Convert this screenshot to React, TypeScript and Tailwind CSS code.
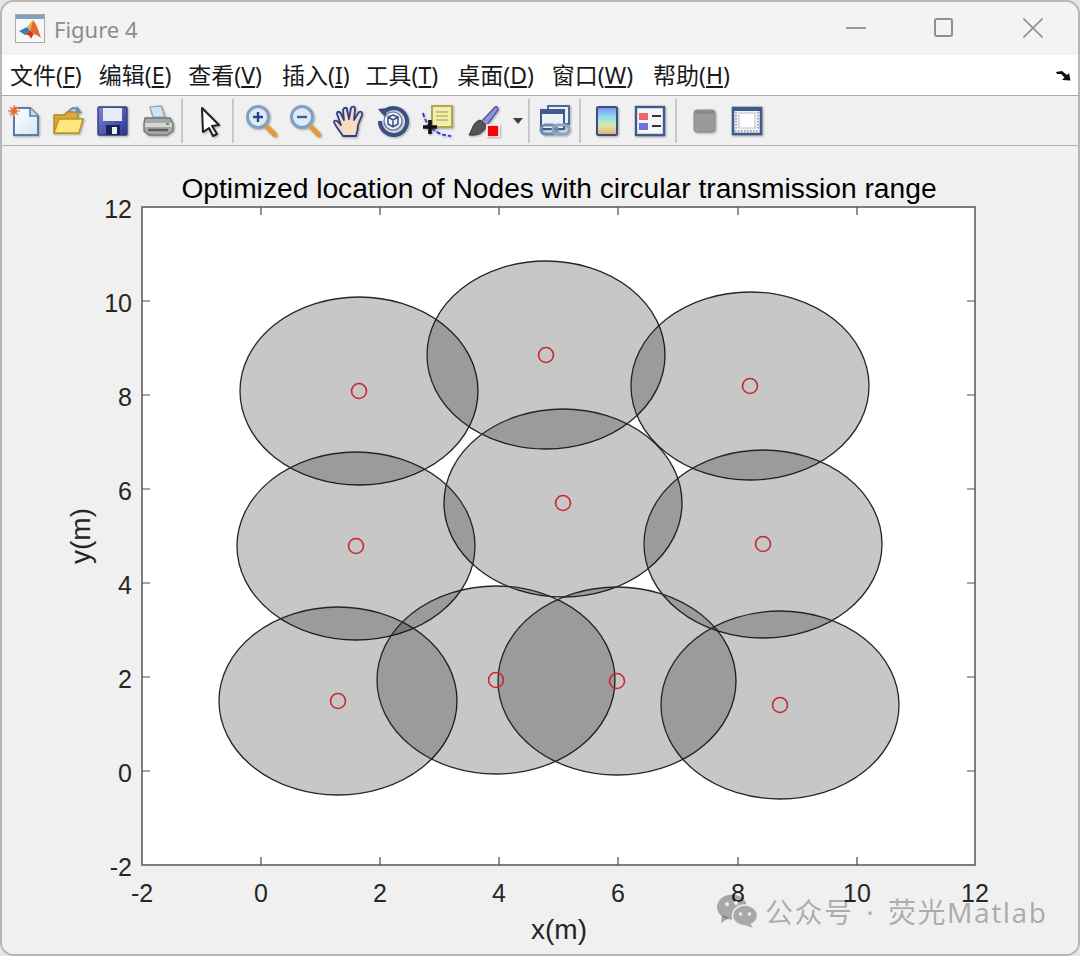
import React from 'react';

// circle centres in screen pixels, read off the plot
const nodes = [
  [359, 391],
  [546, 355],
  [750, 386],
  [563, 503],
  [356, 546],
  [763, 544],
  [338, 701],
  [496, 680],
  [617, 681],
  [780, 705],
];

const xTicks = [
  { label: '-2', x: 142 },
  { label: '0', x: 261 },
  { label: '2', x: 380 },
  { label: '4', x: 499 },
  { label: '6', x: 618 },
  { label: '8', x: 738 },
  { label: '10', x: 857 },
  { label: '12', x: 975 },
];

const yTicks = [
  { label: '12', y: 207 },
  { label: '10', y: 301 },
  { label: '8', y: 395 },
  { label: '6', y: 489 },
  { label: '4', y: 583 },
  { label: '2', y: 677 },
  { label: '0', y: 771 },
  { label: '-2', y: 865 },
];

const menus = [
  { text: '文件', key: 'F', cls: 'ml-[8px]' },
  { text: '编辑', key: 'E', cls: 'ml-[17px]' },
  { text: '查看', key: 'V', cls: 'ml-[17px]' },
  { text: '插入', key: 'I', cls: 'ml-[20px]' },
  { text: '工具', key: 'T', cls: 'ml-[16px]' },
  { text: '桌面', key: 'D', cls: 'ml-[19px]' },
  { text: '窗口', key: 'W', cls: 'ml-[18px]' },
  { text: '帮助', key: 'H', cls: 'ml-[20px]' },
];

const iconCls = 'w-8 h-8 shrink-0 blur-[0.6px] drop-shadow-[1px_1px_1px_rgba(0,0,0,0.3)]';

function Sep({ className }: { className: string }) {
  return <div className={`w-[2px] h-[44px] bg-[#c8c8c8] shrink-0 ${className}`} />;
}

function Tool({ className, children }: { className?: string; children: React.ReactNode }) {
  return (
    <svg viewBox="0 0 32 32" className={`${iconCls} ${className ?? ''}`}>
      {children}
    </svg>
  );
}

function MatlabLogo() {
  return (
    <svg viewBox="0 0 30 30" className="w-[30px] h-[30px] shrink-0">
      <rect x="0.5" y="0.5" width="29" height="28" fill="#f7f7f7" stroke="#a9a9a9" />
      <rect x="1" y="1" width="28" height="4" fill="#7fa3bd" />
      <path d="M4 17 L12 13 L15 16 L10 21 Z" fill="#2f7fc1" />
      <path d="M12 13 L18 6 L15 16 Z" fill="#e9b83a" />
      <path d="M18 6 Q21 8 26 24 Q22 21 19 20 Q16 17 15 16 Z" fill="#e8692b" />
      <path d="M15 16 L19 20 Q17 22 16 25 Q14 20 10 21 Z" fill="#c9401f" />
    </svg>
  );
}

export default function App() {
  return (
    <div className="w-[1080px] h-[956px] bg-[#e2e6e6] font-['Noto_Sans','Noto_Sans_CJK_SC',sans-serif]">
      <div className="relative w-full h-full flex flex-col border-2 border-[#b6b6b6] rounded-[14px] overflow-hidden bg-[#f0f0f0]">
        {/* title bar */}
        <div className="h-[53px] shrink-0 bg-[#f3f3f3] flex items-center pl-[13px]">
          <MatlabLogo />
          <span className="ml-[9px] mt-[2px] text-[22px] text-[#8c8c8c]">Figure 4</span>
          <div className="ml-auto -mt-[2px] flex items-center text-[#8a8a8a]">
            <div className="w-[20px] h-[2px] bg-[#9a9a9a]" />
            <div className="ml-[68px] w-[19px] h-[19px] border-2 border-[#8f8f8f] rounded-[3px]" />
            <svg viewBox="0 0 20 20" className="ml-[70px] mr-[35px] w-[20px] h-[20px]">
              <path d="M0.5 0.5 L19.5 19.5 M19.5 0.5 L0.5 19.5" stroke="#8f8f8f" strokeWidth="1.6" />
            </svg>
          </div>
        </div>

        {/* menu bar */}
        <div className="h-[41px] shrink-0 bg-white border-b border-[#ababab] flex items-center text-[23px] text-[#1a1a1a] leading-none">
          {menus.map((m) => (
            <span key={m.key} className={m.cls}>
              {m.text}(<u className="underline-offset-2">{m.key}</u>)
            </span>
          ))}
          <svg viewBox="0 0 15 11" className="ml-auto mr-[7px] mt-[1px] w-[15px] h-[11px] shrink-0">
            <path d="M0 2 L6 1 L11 5 L13 3 L14.5 10.5 L6 10 L8.5 7.5 L5 4 L1 4 Z" fill="#111" />
          </svg>
        </div>

        {/* toolbar */}
        <div className="h-[50px] shrink-0 bg-[#f0f0f0] border-b border-[#b4b4b4] flex items-center">
          <Tool className="ml-[6px]">
            <defs>
              <linearGradient id="pageFill" x1="0" y1="0" x2="1" y2="1">
                <stop offset="0" stopColor="#ffffff" />
                <stop offset="1" stopColor="#d4e6f7" />
              </linearGradient>
            </defs>
            <path d="M6 3 H22 L30 11 V30 H6 Z" fill="url(#pageFill)" stroke="#5b7ba6" strokeWidth="2" />
            <path d="M22 3 V11 H30" fill="#c7d9ec" stroke="#5b7ba6" strokeWidth="1.5" />
            <path d="M6 0 V12 M0 6 H12 M2 2 L10 10 M10 2 L2 10" stroke="#ef8b4a" strokeWidth="1.4" />
            <circle cx="6" cy="6" r="3" fill="#f26b2c" />
          </Tool>
          <Tool className="ml-[12px]">
            <path d="M2 10 H12 L15 7 H26 V28 H2 Z" fill="#d6a93a" stroke="#b58a22" strokeWidth="1.4" />
            <path d="M2 28 L7 14 H31 L27 28 Z" fill="#ffe57f" stroke="#bd9428" strokeWidth="1.6" />
            <path d="M16 7 Q21 0 27 5" fill="none" stroke="#6a8fb5" strokeWidth="2" />
            <path d="M25 1 L30 8 L23 8 Z" fill="#6a8fb5" />
          </Tool>
          <Tool className="ml-[13px]">
            <defs>
              <linearGradient id="diskFill" x1="0" y1="0" x2="1" y2="1">
                <stop offset="0" stopColor="#7c82d8" />
                <stop offset="1" stopColor="#2c3590" />
              </linearGradient>
            </defs>
            <rect x="1" y="2" width="29" height="28" rx="1" fill="url(#diskFill)" stroke="#33407f" strokeWidth="1.4" />
            <rect x="6" y="3" width="19" height="13" fill="#e8ecf6" />
            <rect x="9" y="20" width="14" height="10" fill="#1b2350" />
            <rect x="15" y="22" width="5" height="7" fill="#e8ecf6" />
          </Tool>
          <Tool className="ml-[13px]">
            <path d="M8 2 L19 1 L23 12 H11 Z" fill="#cfe3f4" stroke="#8fa0ae" strokeWidth="1.2" />
            <path d="M3 13 H28 L31 19 V26 L25 30 H7 L2 26 V18 Z" fill="#a8a8a8" stroke="#777" strokeWidth="1.4" />
            <path d="M3 18 H30 V22 H3 Z" fill="#d6d6d6" />
            <path d="M6 25 H26" stroke="#5c5c5c" strokeWidth="2.5" />
            <rect x="24" y="18" width="3" height="2" fill="#4fa35a" />
          </Tool>
          <Sep className="ml-[7px]" />
          <Tool className="ml-[11px]">
            <path
              d="M8 3 L25 20 L18 21 L23 29 L19 31 L15 23 L9 27 Z"
              fill="#fff"
              stroke="#1f1f1f"
              strokeWidth="2"
              strokeLinejoin="round"
            />
          </Tool>
          <Sep className="ml-[6px]" />
          <Tool className="ml-[11px]">
            <path d="M19 19 L30 30" stroke="#e39a3b" strokeWidth="5" strokeLinecap="round" />
            <circle cx="13" cy="12" r="10.5" fill="#dfeaf7" stroke="#7fa0c4" strokeWidth="3" />
            <path d="M8 12 H18 M13 7 V17" stroke="#29448c" strokeWidth="2.4" />
          </Tool>
          <Tool className="ml-[12px]">
            <path d="M19 19 L30 30" stroke="#e39a3b" strokeWidth="5" strokeLinecap="round" />
            <circle cx="13" cy="12" r="10.5" fill="#dfeaf7" stroke="#7fa0c4" strokeWidth="3" />
            <path d="M8 12 H18" stroke="#3f5b96" strokeWidth="2.4" />
          </Tool>
          <Tool className="ml-[12px]">
            <path
              d="M10 31 C7 26 3 22 1 17 C1 15 4 15 6 18 L8 20 L4 9 C4 6 7 6 8 9 L11 15 L10 5 C11 2 14 2 14 5 L16 14 L18 3 C19 1 22 1 22 4 L21 15 L26 7 C28 6 30 8 29 10 L25 20 C25 25 24 28 23 31 Z"
              fill="#f8dcc2"
              stroke="#2d3f86"
              strokeWidth="1.8"
              strokeLinejoin="round"
            />
          </Tool>
          <Tool className="ml-[12px]">
            <path d="M8 6 A13.5 13.5 0 1 1 3 16" fill="none" stroke="#3a4f85" strokeWidth="4" />
            <path d="M1 4 L11 3 L8 12 Z" fill="#3a4f85" />
            <circle cx="16" cy="16" r="9" fill="#eef2f8" stroke="#5d6f95" strokeWidth="1.2" />
            <path d="M11 12 L16 10 L21 12 V19 L16 22 L11 19 Z M11 12 L16 15 L21 12 M16 15 V22" fill="none" stroke="#3a4f85" strokeWidth="1.5" />
          </Tool>
          <Tool className="ml-[12px]">
            <rect x="11" y="1" width="20" height="21" fill="#f3eeb0" stroke="#b0a850" strokeWidth="2" />
            <path d="M15 7 H27 M15 11 H27 M15 15 H27" stroke="#bcb56a" strokeWidth="1.6" />
            <path d="M2 8 Q5 20 13 25 Q19 30 30 31" fill="none" stroke="#2f35e0" strokeWidth="1.8" strokeDasharray="4 2" />
            <path d="M2 22 H16 M9 15 V29" stroke="#111" strokeWidth="3.6" />
          </Tool>
          <Tool className="ml-[15px]">
            <path d="M13 17 L27 2 Q30 1 30 5 L18 21 Z" fill="#8e94d8" stroke="#4a5aa8" strokeWidth="1.4" />
            <path d="M12 15 Q6 17 4 24 L1 30 Q12 31 16 25 L19 21 Z" fill="#555" stroke="#333" strokeWidth="1" />
            <rect x="19" y="20" width="12" height="12" fill="#ff0000" stroke="#fff" strokeWidth="1.6" />
          </Tool>
          <svg viewBox="0 0 10 6" className="ml-[13px] w-[10px] h-[6px] shrink-0">
            <path d="M0 0 H10 L5 6 Z" fill="#3d3d3d" />
          </svg>
          <Sep className="ml-[5px]" />
          <Tool className="ml-[9px]">
            <rect x="9" y="1" width="21" height="18" fill="#e9eef6" stroke="#4d6a99" strokeWidth="2" />
            <rect x="2" y="5" width="23" height="19" fill="#eef2f8" stroke="#3f5a8c" strokeWidth="2" />
            <rect x="2" y="5" width="23" height="4" fill="#3f5a8c" />
            <rect x="2" y="20" width="16" height="9" rx="4.5" fill="none" stroke="#6d8db3" strokeWidth="3" />
            <rect x="14" y="20" width="16" height="9" rx="4.5" fill="none" stroke="#8aa6c6" strokeWidth="3" />
          </Tool>
          <Sep className="ml-[8px]" />
          <Tool className="ml-[10px]">
            <defs>
              <linearGradient id="cbar" x1="0" y1="0" x2="0" y2="1">
                <stop offset="0" stopColor="#7f8df0" />
                <stop offset="0.35" stopColor="#8fdcec" />
                <stop offset="0.65" stopColor="#d5ecb0" />
                <stop offset="1" stopColor="#f2a870" />
              </linearGradient>
            </defs>
            <rect x="6" y="2" width="20" height="28" rx="1.5" fill="url(#cbar)" stroke="#3a4f85" strokeWidth="2" />
          </Tool>
          <Tool className="ml-[11px]">
            <rect x="2" y="2" width="28" height="28" fill="#f4f6fa" stroke="#3f5a8c" strokeWidth="2.4" />
            <rect x="5" y="8" width="9" height="7" fill="#e8686c" />
            <rect x="5" y="18" width="9" height="7" fill="#6e6ee8" />
            <path d="M18 11 H27 M18 21 H27" stroke="#333" strokeWidth="2.2" />
          </Tool>
          <Sep className="ml-[9px]" />
          <Tool className="ml-[11px]">
            <rect x="6" y="5" width="21" height="22" rx="3" fill="#9a9a9a" stroke="#8a8a8a" />
            <rect x="6" y="5" width="21" height="4" rx="2" fill="#8b8b8b" />
          </Tool>
          <Tool className="ml-[11px]">
            <rect x="2" y="3" width="28" height="26" fill="#f0f3f8" stroke="#3f5a8c" strokeWidth="2.6" />
            <rect x="2" y="3" width="28" height="3" fill="#3f5a8c" />
            <rect x="8" y="8" width="16" height="15" fill="#fff" stroke="#b8c2d0" />
            <path d="M5 7 V24 M27 7 V24 M4 26 H28" stroke="#a9a9a9" strokeWidth="2" strokeDasharray="1.5 1.5" />
          </Tool>
        </div>

        {/* figure area */}
        <div className="flex-1 min-h-0 bg-[#f0f0f0]">
          <svg viewBox="2 146 1076 806" className="w-[1076px] h-[806px] block font-['Liberation_Sans',sans-serif]">
            <rect x="142" y="207" width="833" height="658" fill="#fff" />
            {nodes.map(([cx, cy]) => (
              <ellipse
                key={`${cx}-${cy}`}
                cx={cx}
                cy={cy}
                rx="119"
                ry="94"
                fill="#000"
                fillOpacity="0.22"
                stroke="#262626"
                strokeWidth="1.3"
              />
            ))}
            {nodes.map(([cx, cy]) => (
              <circle key={`n-${cx}`} cx={cx} cy={cy} r="7.5" fill="none" stroke="#c8282c" strokeWidth="1.6" />
            ))}
            <rect x="142" y="207" width="833" height="658" fill="none" stroke="#4a4a4a" strokeWidth="1.4" />
            {xTicks.slice(1, -1).map((t) => (
              <path key={t.x} d={`M${t.x} 207 V215 M${t.x} 865 V857`} stroke="#4a4a4a" strokeWidth="1.2" />
            ))}
            {yTicks.slice(1, -1).map((t) => (
              <path key={t.y} d={`M142 ${t.y} H150 M975 ${t.y} H967`} stroke="#4a4a4a" strokeWidth="1.2" />
            ))}
            {xTicks.map((t) => (
              <text key={t.x} x={t.x} y="902" textAnchor="middle" className="text-[25px] fill-[#262626]">
                {t.label}
              </text>
            ))}
            {yTicks.map((t) => (
              <text key={t.y} x="132" y={t.y + 10.5} textAnchor="end" className="text-[25px] fill-[#262626]">
                {t.label}
              </text>
            ))}
            <text x="559" y="198" textAnchor="middle" className="text-[28.2px] fill-black">
              Optimized location of Nodes with circular transmission range
            </text>
            <text x="559" y="939" textAnchor="middle" className="text-[28px] fill-[#262626]">
              x(m)
            </text>
            <text
              x="0"
              y="0"
              textAnchor="middle"
              transform="translate(90 536) rotate(-90)"
              className="text-[28px] fill-[#262626]"
            >
              y(m)
            </text>
          </svg>
        </div>

        {/* watermark lies over the axis labels */}
        <div className="absolute left-[714px] top-[892px] flex items-center">
          <svg viewBox="0 0 42 34" className="w-[42px] h-[34px]">
            <ellipse cx="16" cy="13" rx="15" ry="12.5" fill="#000" fillOpacity="0.3" />
            <path d="M6 21 L5 29 L13 24 Z" fill="#000" fillOpacity="0.3" />
            <ellipse cx="29" cy="21.5" rx="12.5" ry="10.5" fill="#a8a8a8" stroke="#eeeeee" strokeWidth="1.5" />
            <path d="M34 29 L37 34 L29 31 Z" fill="#a8a8a8" />
            <circle cx="24.5" cy="20" r="1.8" fill="#eee" />
            <circle cx="33.5" cy="20" r="1.8" fill="#eee" />
            <circle cx="11" cy="10" r="2" fill="#eee" />
            <circle cx="20" cy="9" r="2" fill="#eee" />
          </svg>
          <span className="ml-[7px] mt-[2px] text-[28px] leading-none tracking-[1.5px] [word-spacing:4px] text-black/30 font-['Noto_Sans','Noto_Sans_CJK_SC',sans-serif]">
            公众号 · 荧光Matlab
          </span>
        </div>
      </div>
    </div>
  );
}
